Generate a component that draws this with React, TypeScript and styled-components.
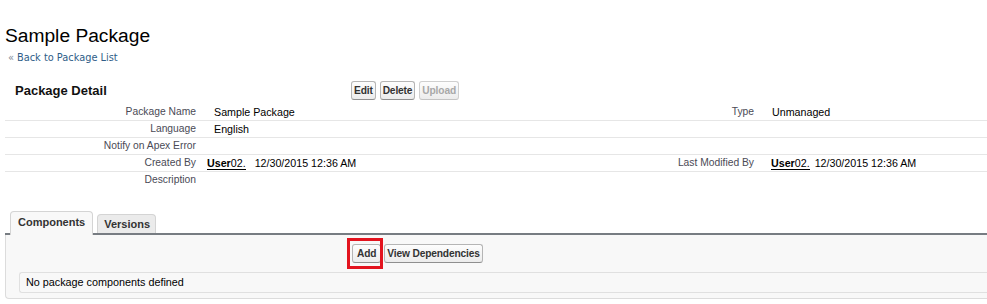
import React from "react";
import styled, { createGlobalStyle } from "styled-components";

const GlobalStyle = createGlobalStyle`
  body {
    margin: 0;
    background: #fff;
    font-family: "Liberation Sans", Arial, sans-serif;
    color: #000;
  }
`;

const Page = styled.div`
  padding-left: 5px;
  overflow: hidden;
`;

const Title = styled.h1`
  margin: 24px 0 0;
  font-size: 19.2px;
  font-weight: normal;
  line-height: 23px;
  color: #000;
`;

const BackLink = styled.div`
  margin: 5px 0 0 3px;
  height: 14px;
  font-family: "DejaVu Sans", Verdana, sans-serif;
  font-size: 9.8px;
  line-height: 12px;
  color: #2f5d88;

  span {
    color: #7d8896;
    margin-right: 3px;
  }
`;

const DetailHeader = styled.div`
  display: grid;
  grid-template-columns: 346px 1fr;
  align-items: center;
  margin-top: 11px;
  padding: 4px 0;
`;

const SectionTitle = styled.h2`
  margin: 0;
  padding-left: 10px;
  font-size: 13px;
  font-weight: bold;
  line-height: 16px;
  color: #111;
`;

const ButtonRow = styled.div`
  display: flex;
  gap: 4px;
  align-items: center;
`;

const Button = styled.button<{ $disabled?: boolean; $pad?: number }>`
  font-family: "Liberation Sans", Arial, sans-serif;
  font-size: 10.2px;
  font-weight: bold;
  letter-spacing: -0.15px;
  line-height: 13px;
  padding: 2px ${(p) => p.$pad ?? 2}px;
  border: 1px solid ${(p) => (p.$disabled ? "#cfcfcf" : "#b5b5b5")};
  border-bottom-color: ${(p) => (p.$disabled ? "#c4c4c4" : "#8f8f8f")};
  border-radius: 3px;
  background: linear-gradient(#fdfdfd, #ececec);
  color: ${(p) => (p.$disabled ? "#a8a8a8" : "#333")};
  cursor: pointer;
`;

const DetailGrid = styled.div`
  display: grid;
  grid-template-columns: 201px 357px 201px 1fr;
`;

const Cell = styled.div<{ $label?: boolean; $last?: boolean }>`
  height: 16px;
  line-height: 16px;
  font-size: ${(p) => (p.$label ? "10.3px" : "10.7px")};
  white-space: nowrap;
  border-bottom: 1px solid ${(p) => (p.$last ? "transparent" : "#e6e6e6")};
  padding: ${(p) => (p.$label ? "0 10px 0 0" : "0 0 0 8px")};
  color: ${(p) => (p.$label ? "#4a4a56" : "#000")};
  display: flex;
  justify-content: ${(p) => (p.$label ? "flex-end" : "flex-start")};
  align-items: center;
`;

const UserLink = styled.a<{ $shift: number; $gap: number }>`
  margin-left: ${(p) => p.$shift}px;
  margin-right: ${(p) => p.$gap}px;
  color: #000;
  text-decoration: none;
  border-bottom: 1.5px solid #000;
  line-height: 12px;
  padding-top: 1px;

  b {
    font-weight: bold;
  }
`;

const TabBar = styled.div`
  display: flex;
  align-items: flex-end;
  gap: 4px;
  margin-top: 22px;
  padding-left: 5px;
  border-bottom: 2px solid #777c82;
  height: 22px;
`;

const Tab = styled.div<{ $active?: boolean }>`
  font-size: 11px;
  font-weight: bold;
  line-height: 13px;
  color: #333;
  border: 1px solid #d4d4d4;
  border-bottom: none;
  border-radius: 4px 4px 0 0;
  padding: ${(p) => (p.$active ? "4px 7px 6px" : "3px 5px 2px 6px")};
  background: ${(p) => (p.$active ? "#f8f8f8" : "#ebebeb")};
  margin-bottom: ${(p) => (p.$active ? "-2px" : "0")};
  position: relative;
`;

const Panel = styled.div`
  background: #f8f8f8;
  border-left: 1px solid #dcdcdc;
  border-bottom: 1px solid #dcdcdc;
  border-bottom-left-radius: 4px;
  padding-bottom: 5px;
`;

const PanelButtons = styled.div`
  display: flex;
  gap: 3px;
  align-items: center;
  height: 37px;
  padding-left: 346px;
`;

const Highlight = styled.div`
  position: relative;
  display: flex;

  &::after {
    content: "";
    position: absolute;
    top: -6px;
    bottom: -6px;
    left: -5px;
    right: -2px;
    border: 3px solid #e3141f;
    pointer-events: none;
  }
`;

const EmptyRow = styled.div`
  margin-left: 13px;
  height: 19px;
  line-height: 19px;
  border-top: 1px solid #e0e0e0;
  border-bottom: 1px solid #e0e0e0;
  border-left: 1px solid #e0e0e0;
  border-radius: 3px 0 0 3px;
  padding-left: 6px;
  font-size: 10.8px;
  color: #000;
`;

type Field = { label: string; value?: React.ReactNode };

const rows: [Field, Field][] = [
  [{ label: "Package Name", value: "Sample Package" }, { label: "Type", value: "Unmanaged" }],
  [{ label: "Language", value: "English" }, { label: "" }],
  [{ label: "Notify on Apex Error" }, { label: "" }],
  [
    {
      label: "Created By",
      value: (
        <>
          <UserLink href="#" $shift={-7} $gap={9}>
            <b>User</b>02.
          </UserLink>
          12/30/2015 12:36 AM
        </>
      ),
    },
    {
      label: "Last Modified By",
      value: (
        <>
          <UserLink href="#" $shift={-1} $gap={5}>
            <b>User</b>02.
          </UserLink>
          12/30/2015 12:36 AM
        </>
      ),
    },
  ],
  [{ label: "Description" }, { label: "" }],
];

export default function App() {
  return (
    <Page>
      <GlobalStyle />
      <Title>Sample Package</Title>
      <BackLink>
        <span>«</span>Back to Package List
      </BackLink>

      <DetailHeader>
        <SectionTitle>Package Detail</SectionTitle>
        <ButtonRow>
          <Button>Edit</Button>
          <Button>Delete</Button>
          <Button $disabled>Upload</Button>
        </ButtonRow>
      </DetailHeader>

      <DetailGrid>
        {rows.map((pair, i) => {
          const last = i === rows.length - 1;
          return (
            <React.Fragment key={i}>
              {pair.map((f, j) => (
                <React.Fragment key={j}>
                  <Cell $label $last={last}>{f.label}</Cell>
                  <Cell $last={last}>{f.value}</Cell>
                </React.Fragment>
              ))}
            </React.Fragment>
          );
        })}
      </DetailGrid>

      <TabBar>
        <Tab $active>Components</Tab>
        <Tab>Versions</Tab>
      </TabBar>
      <Panel>
        <PanelButtons>
          <Highlight>
            <Button $pad={4}>Add</Button>
          </Highlight>
          <Button>View Dependencies</Button>
        </PanelButtons>
        <EmptyRow>No package components defined</EmptyRow>
      </Panel>
    </Page>
  );
}
